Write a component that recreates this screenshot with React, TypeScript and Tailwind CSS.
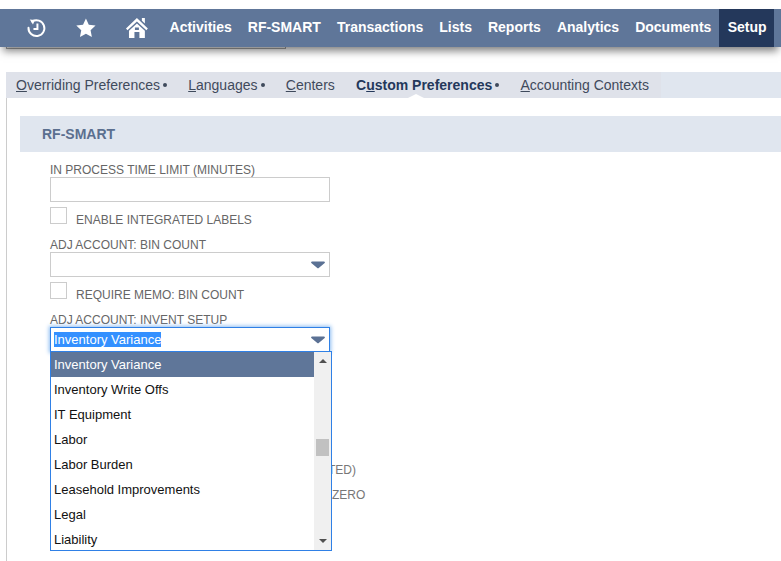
import type { ReactNode } from 'react';

const navItems = ['Activities', 'RF-SMART', 'Transactions', 'Lists', 'Reports', 'Analytics', 'Documents'];

const options = [
  'Inventory Variance',
  'Inventory Write Offs',
  'IT Equipment',
  'Labor',
  'Labor Burden',
  'Leasehold Improvements',
  'Legal',
  'Liability',
];

function Arrow() {
  return (
    <svg width="16" height="9" viewBox="0 0 16 9" className="block">
      <path d="M2 1.500h12a1 1 0 0 1 .7 1.600L9 7.700a1.400 1.400 0 0 1-2 0L1.300 3.100A1 1 0 0 1 2 1.500z" fill="#5b7194" />
    </svg>
  );
}

function Label({ children }: { children: ReactNode }) {
  return <div className="h-[15px] text-xs leading-[17px] text-[#666666]">{children}</div>;
}

function CheckRow({ label }: { label: string }) {
  return (
    <div className="mt-[5px] flex h-[17px] w-[280px]">
      <div className="h-[17px] w-[17px] border border-[#cccccc] bg-white" />
      <span className="mt-[5px] ml-[9px] text-xs leading-[17px] whitespace-nowrap text-[#666666]">{label}</span>
    </div>
  );
}

function Tab({ letter, rest, dot, active }: { letter: string; rest: string; dot?: boolean; active?: boolean }) {
  return (
    <div className={`relative flex h-full items-center pr-[11.25px] pl-2.5 ${active ? 'font-bold text-[#24385b]' : 'text-[#3f4a5c]'}`}>
      <span className="whitespace-nowrap">
        {active ? (
          <>
            C<span className="underline">u</span>stom Preferences
          </>
        ) : (
          <>
            <span className="underline">{letter}</span>
            {rest}
          </>
        )}
      </span>
      {dot && <span className="ml-[3px] h-1 w-1 rounded-full bg-[#3f4a5c]" />}
      {active && <span className="absolute bottom-0 left-[62px] h-0 w-0 border-x-[8px] border-b-[4px] border-x-transparent border-b-white" />}
    </div>
  );
}

export default function App() {
  return (
    <div className="h-[561px] w-[781px] overflow-hidden bg-white font-['Liberation_Sans',Arial,sans-serif]">
      <div className="h-[9px]" />

      {/* Nav */}
      <nav className="relative z-10 flex h-[38px] items-center bg-[#5f7699] pr-[7px] pl-[27px] text-white shadow-[0_7px_8px_-3px_rgba(0,0,0,0.5)]">
        <svg width="20" height="20" viewBox="0 0 20 20" className="mr-[28px]" fill="none" stroke="#fff" strokeWidth="2">
          <path d="M5.200 3.400A8 8 0 1 1 1.500 9.800" strokeLinecap="round" />
          <path d="M2.800 1.400l5.200.600-2 4.600z" fill="#fff" stroke="none" />
          <path d="M10.500 5.500v5.500H6.500" />
        </svg>
        <svg width="22" height="22" viewBox="0 0 22 22" className="mr-[28px]">
          <path d="M11 1.500l2.900 6.300 6.800.800-5 4.700 1.300 6.800L11 16.700l-6 3.400 1.300-6.800-5-4.700 6.800-.800z" fill="#fff" />
        </svg>
        <svg width="24" height="22" viewBox="0 0 24 22" className="mr-[21px]">
          <path d="M17 1h3v5.500l-3-2.700z" fill="#fff" />
          <path d="M12 1 1 11.500l1.500 1.700L12 4.400l9.500 8.800 1.500-1.700z" fill="#fff" />
          <path d="M12 6.500 4 13.800V21h5.500v-6h5v6H20v-7.200zM10 10.500h4v2.500h-4z" fill="#fff" fillRule="evenodd" />
        </svg>
        {navItems.map((item) => (
          <div key={item} className="mr-4 -translate-y-px text-sm leading-none font-bold whitespace-nowrap">
            {item}
          </div>
        ))}
        <div className="-ml-2 flex h-full w-[55px] items-center justify-center bg-[#24385b] pb-[3px] pl-px text-sm font-bold">Setup</div>
      </nav>

      {/* Clipped box beneath the nav */}
      <div className="h-[25px]">
        <div className="ml-[6px] h-[2px] w-[280px] border-x border-b border-[#a8a8a8]" />
      </div>

      {/* Tabs */}
      <div className="ml-[6px] flex h-[26px] bg-[#e0e6ef] text-sm">
        <div className="flex h-full w-[655px] items-center bg-[#dfe2ea]">
          <Tab letter="O" rest="verriding Preferences" dot />
          <Tab letter="L" rest="anguages" dot />
          <Tab letter="C" rest="enters" />
          <Tab letter="C" rest="ustom Preferences" dot active />
          <Tab letter="A" rest="ccounting Contexts" />
        </div>
      </div>

      {/* Body */}
      <div className="ml-[6px] h-[463px] border-l border-[#cccccc] pt-[18px] pl-[13px]">
        <div className="flex h-[36px] items-center bg-[#e0e6ef] pl-[22px] text-sm font-bold text-[#5b6f8f]">RF-SMART</div>

        <div className="pt-[10px] pl-[30px]">
          <Label>IN PROCESS TIME LIMIT (MINUTES)</Label>
          <div className="h-[25px] w-[280px] border border-[#cccccc] bg-white" />
          <CheckRow label="ENABLE INTEGRATED LABELS" />

          <div className="mt-[13px]">
            <Label>ADJ ACCOUNT: BIN COUNT</Label>
          </div>
          <div className="flex h-[25px] w-[280px] items-center justify-end border border-[#cccccc] bg-white pr-[3px]">
            <Arrow />
          </div>
          <CheckRow label="REQUIRE MEMO: BIN COUNT" />

          <div className="mt-[13px]">
            <Label>ADJ ACCOUNT: INVENT SETUP</Label>
          </div>

          <div className="relative w-[280px]">
            <div className="flex h-[25px] items-center justify-between border border-[#2f80e6] bg-white px-[3px] shadow-[0_0_4px_1px_#8dbdf2]">
              <span className="bg-[#3390ff] text-[13px] leading-[15px] text-white">Inventory Variance</span>
              <Arrow />
            </div>

            {/* Open dropdown */}
            <div className="absolute top-[24px] left-0 z-20 flex h-[200px] w-[282px] border border-[#2f80e6] bg-white text-[13px] text-[#111111]">
              <ul className="w-[263px]">
                {options.map((opt, i) => (
                  <li
                    key={opt}
                    className={`flex h-[25px] items-center pl-[3px] whitespace-nowrap ${i === 0 ? 'bg-[#5f7699] text-white' : ''}`}
                  >
                    {opt}
                  </li>
                ))}
              </ul>
              <div className="relative flex w-[17px] flex-col items-center justify-between bg-[#f0f0f0] py-[7px]">
                <span className="h-0 w-0 border-x-[4px] border-b-[4px] border-x-transparent border-b-[#505050]" />
                <span className="absolute top-[87px] left-[2px] h-[17px] w-[13px] bg-[#c1c1c1]" />
                <span className="h-0 w-0 border-x-[4px] border-t-[4px] border-x-transparent border-t-[#505050]" />
              </div>
            </div>
          </div>

          {/* Rows mostly hidden behind the dropdown */}
          <div className="mt-[110px] ml-[278px] h-[25px] text-xs leading-[17px] text-[#777777]">TED)</div>
          <div className="ml-[282px] h-[25px] text-xs leading-[17px] text-[#777777]">ZERO</div>
        </div>
      </div>
    </div>
  );
}
